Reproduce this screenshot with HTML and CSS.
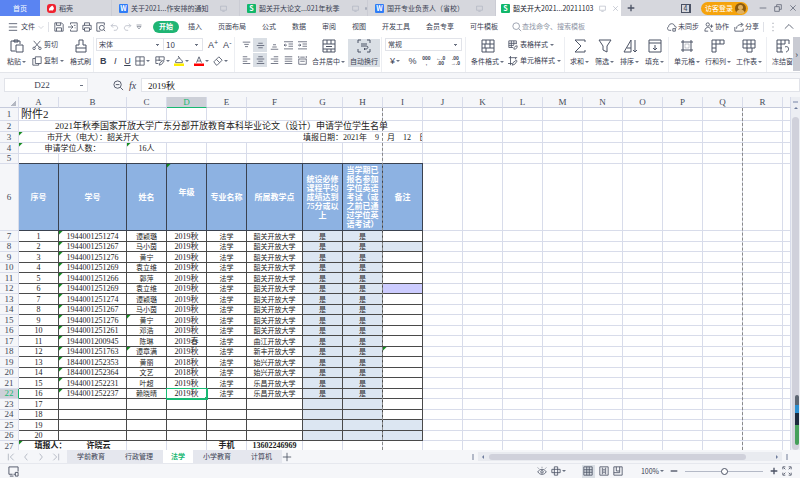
FILE: index.html
```html
<!DOCTYPE html>
<html lang="zh-CN">
<head>
<meta charset="utf-8">
<title>表格</title>
<link rel="stylesheet" href="styles.css">
</head>
<body>
<svg class="defs" aria-hidden="true">
  <symbol id="i-menu" viewBox="0 0 12 12"><path d="M1 2h10M1 6h10M1 10h10"/></symbol>
  <symbol id="i-down" viewBox="0 0 12 12"><path d="M1 4l5 5 5-5"/></symbol>
  <symbol id="i-up" viewBox="0 0 12 12"><path d="M1 8l5-5 5 5"/></symbol>
  <symbol id="i-left" viewBox="0 0 12 12"><path d="M8 1L4 6l4 5"/></symbol>
  <symbol id="i-right" viewBox="0 0 12 12"><path d="M4 1l4 5-4 5"/></symbol>
  <symbol id="i-first" viewBox="0 0 12 12"><path d="M2 1v10M10 1L5 6l5 5"/></symbol>
  <symbol id="i-last" viewBox="0 0 12 12"><path d="M10 1v10M2 1l5 5-5 5"/></symbol>
  <symbol id="i-more" viewBox="0 0 12 12"><path d="M1 2h10M2 5l4 5 4-5z"/></symbol>
  <symbol id="i-flame" viewBox="0 0 12 12"><path d="M7 2c-4 3-5 4-4 7 2-1 3-1 4 0 3-2 3-4 0-7z"/></symbol>
  <symbol id="i-save" viewBox="0 0 12 12"><path d="M1 1h8l2 2v8H1zM3 1v3h5V1M3 11V7h6v4"/></symbol>
  <symbol id="i-export" viewBox="0 0 12 12"><path d="M3 3V1h8v10H3V9M0 6h6M4 4l2 2-2 2M7 4h2M8 7h1"/></symbol>
  <symbol id="i-print" viewBox="0 0 12 12"><path d="M3 4V1h6v3M3 9H1V4h10v5H9M3 7h6v4H3z"/></symbol>
  <symbol id="i-preview" viewBox="0 0 12 12"><path d="M5 11H1V1h9v3M9 9l2 2"/><circle cx="7" cy="7" r="3"/></symbol>
  <symbol id="i-undo" viewBox="0 0 12 12"><path d="M4 1L1 4l3 3M1 4h6c5 0 5 7 0 7H5"/></symbol>
  <symbol id="i-redo" viewBox="0 0 12 12"><path d="M8 1l3 3-3 3M11 4H5c-5 0-5 7 0 7h2"/></symbol>
  <symbol id="i-search" viewBox="0 0 12 12"><circle cx="5" cy="5" r="4"/><path d="M8 8l3 3"/></symbol>
  <symbol id="i-zoom" viewBox="0 0 12 12"><circle cx="5" cy="5" r="4"/><path d="M8 8l3 3M3 5h4"/></symbol>
  <symbol id="i-cloud" viewBox="0 0 12 12"><path d="M5 10H3C0 10 0 6 2 5.500C2 1 9 1 9 5c3 0 2 3 1 3M7 8h3v3H7z"/></symbol>
  <symbol id="i-people" viewBox="0 0 12 12"><circle cx="4.500" cy="3" r="2"/><path d="M1 11c0-6 7-6 7-1M1 11h4M9 3v4M7 5h4M8 11h3"/></symbol>
  <symbol id="i-share" viewBox="0 0 12 12"><path d="M1 6v5h10V8M3 8c0-4 3-5 7-5M8 1l3 2-3 3"/></symbol>
  <symbol id="i-dots" viewBox="0 0 12 12"><path d="M6 1v1M6 5.500v1M6 10v1"/></symbol>
  <symbol id="i-screen" viewBox="0 0 12 12"><path d="M1 2h10v7H1zM4 11h4"/></symbol>
  <symbol id="i-close" viewBox="0 0 12 12"><path d="M2 2l8 8M10 2l-8 8"/></symbol>
  <symbol id="i-plus" viewBox="0 0 12 12"><path d="M6 1v10M1 6h10"/></symbol>
  <symbol id="i-minus" viewBox="0 0 12 12"><path d="M1 6h10"/></symbol>
  <symbol id="i-restore" viewBox="0 0 12 12"><path d="M1 4h7v7H1zM4 4V1h7v7H8"/></symbol>
  <symbol id="i-paste" viewBox="0 0 14 14"><path d="M5 12H1V2h9v3M4 1h4v2H4zM6 6h7v7H6z"/></symbol>
  <symbol id="i-cut" viewBox="0 0 12 12"><path d="M2 1l7 8M10 1L3 9"/><circle cx="2.500" cy="10" r="1.500"/><circle cx="9.500" cy="10" r="1.500"/></symbol>
  <symbol id="i-copy" viewBox="0 0 12 12"><path d="M4 1h7v8H4zM4 3H1v8h7V9"/></symbol>
  <symbol id="i-brush" viewBox="0 0 14 14"><path d="M5 6V1h4v5h3v3H2V6zM2 9v4h10V9"/></symbol>
  <symbol id="i-border" viewBox="0 0 12 12"><path d="M1 1h10v10H1zM6 1v10M1 6h10"/></symbol>
  <symbol id="i-draw" viewBox="0 0 12 12"><path d="M11 5V1H1v8h3M1 5h7M5 1v5M5 11l1-3 4-3 1 1-3 4z"/></symbol>
  <symbol id="i-fill" viewBox="0 0 12 12"><path d="M2 6l4-4 4 4v2H2zM5 0l2 3"/><path class="yellow" d="M0 9h12v3H0z"/></symbol>
  <symbol id="i-color" viewBox="0 0 12 12"><path d="M3 8l3-7 3 7M4 6h4"/><path class="red" d="M0 9h12v3H0z"/></symbol>
  <symbol id="i-eraser" viewBox="0 0 12 12"><path d="M1 7l6-6 4 4-6 6H4zM4 4l4 4"/></symbol>
  <symbol id="i-top" viewBox="0 0 12 12"><path d="M1 1.500h10M3 4.500h6M4 7.500h4"/></symbol>
  <symbol id="i-mid" viewBox="0 0 12 12"><path d="M3 3h6M1 6h10M3 9h6"/></symbol>
  <symbol id="i-bot" viewBox="0 0 12 12"><path d="M4 5h4M3 8h6M1 11h10"/></symbol>
  <symbol id="i-outdent" viewBox="0 0 12 12"><path d="M0 1h12M6 4h6M6 7h6M0 10.500h12M4 5.500H0M2 4L0 5.500 2 7"/></symbol>
  <symbol id="i-indent" viewBox="0 0 12 12"><path d="M0 1h12M6 4h6M6 7h6M0 10.500h12M0 5.500h4M2 4l2 1.500L2 7"/></symbol>
  <symbol id="i-al" viewBox="0 0 12 12"><path d="M1 1h6M1 4h10M1 7h6M1 10h10"/></symbol>
  <symbol id="i-ac" viewBox="0 0 12 12"><path d="M3 1h6M1 4h10M3 7h6M1 10h10"/></symbol>
  <symbol id="i-ar" viewBox="0 0 12 12"><path d="M5 1h6M1 4h10M5 7h6M1 10h10"/></symbol>
  <symbol id="i-aj" viewBox="0 0 12 12"><path d="M1 1h10M1 4h10M1 7h10M1 10h10"/></symbol>
  <symbol id="i-dist" viewBox="0 0 12 12"><path d="M1 4h10v7H1zM1 0v3M11 0v3M3 1.500h6M3 7h6"/></symbol>
  <symbol id="i-merge" viewBox="0 0 14 14"><path d="M1 1h12v12H1zM1 5h12M1 10h12M5 1v4M9 1v4M5 10v3M9 10v3M4 7.500h6"/></symbol>
  <symbol id="i-wrap" viewBox="0 0 14 14"><path d="M4 1H1v3M10 1h3v3M1 10v3h3M13 10v3h-3M4 5h6M4 7h5c3 0 2 3 0 3H7M8 9l-1 1 1 1"/></symbol>
  <symbol id="i-cond" viewBox="0 0 14 14"><path d="M1 1h12v12H1zM1 5h12M1 9h12M5 1v4M9 1v4M4 5v4M9 5v4M5 9v4"/></symbol>
  <symbol id="i-tstyle" viewBox="0 0 12 12"><path d="M6 9H1V1h9v4M1 4h9M1 6.500h6M4 1v8M7 1v5M7 11c0-3 2-4 4-4 0 3-1 4-4 4"/></symbol>
  <symbol id="i-cstyle" viewBox="0 0 12 12"><path d="M1 2h10M3 0v11M0 9h5M9 2v2M5 11l1-3 4-3 1 1-3 4z"/></symbol>
  <symbol id="i-sum" viewBox="0 0 14 14"><path d="M12 3V1H2l6 6-6 6h10v-2"/></symbol>
  <symbol id="i-filter" viewBox="0 0 14 14"><path d="M1 1h12L9 7v6l-4-2V7z"/></symbol>
  <symbol id="i-sort" viewBox="0 0 14 14"><path d="M1 13L8 1v12zM4 9h4M12 1v12M10 11l2 2 2-2"/></symbol>
  <symbol id="i-filldown" viewBox="0 0 14 14"><path d="M1 1h12v12H1zM1 4h12M7 6v5M5 9l2 2 2-2"/></symbol>
  <symbol id="i-cell" viewBox="0 0 14 14"><path d="M3 1v12M11 1v12M1 3h12M1 11h12"/><path d="M5 5h4v4H5z" opacity=".3"/></symbol>
  <symbol id="i-rowcol" viewBox="0 0 14 14"><path d="M1 1h12v4H1zM1 5v8h4V1M9 1v4M1 9h4"/></symbol>
  <symbol id="i-work" viewBox="0 0 14 14"><path d="M10 13H5V9H1V1h12v8h-3v4M1 5h12M5 1v8h5M9 1v8"/></symbol>
  <symbol id="i-freeze" viewBox="0 0 14 14"><path d="M7 13H1V1h12v4M1 5h8M1 9h5M5 1v12M9 1v4M9 8c4-2 5 4 1 5"/></symbol>
  <symbol id="i-eye" viewBox="0 0 12 12"><path d="M1 7c2-4 8-4 10 0-2 4-8 4-10 0M2 3L1 2M6 2V1M10 3l1-1"/><circle cx="6" cy="7" r="1.500"/></symbol>
  <symbol id="i-cross" viewBox="0 0 12 12"><path d="M4 1h4v10H4zM1 4h10v4H1z"/></symbol>
  <symbol id="i-grid" viewBox="0 0 12 12"><path d="M1 1h10v10H1zM1 4.500h10M1 7.500h10M4.500 1v10M7.500 1v10"/></symbol>
  <symbol id="i-page" viewBox="0 0 12 12"><path d="M1 1h10v10H1zM4 2v8M8 2v8M5 4h2M5 6h2M5 8h2"/></symbol>
  <symbol id="i-break" viewBox="0 0 12 12"><path d="M1 1h10v10H1zM4 1v5h4V1M8 6v2H1"/></symbol>
  <symbol id="i-full" viewBox="0 0 12 12"><path d="M1 4V1h3M8 1h3v3M11 8v3H8M4 11H1V8M2 2l2 2M10 2L8 4M2 10l2-2M10 10L8 8"/></symbol>
  <symbol id="i-task" viewBox="0 0 12 12"><path d="M5 9H1V1h10v5M2 11h4M8 7h3v4H8zM6 9h2"/></symbol>
</svg>

<header class="titlebar">
  <a class="doc home" href="#">首页</a>
  <a class="doc shell" href="#"><svg class="logo flame"><use href="#i-flame"/></svg>稻壳</a>
  <a class="doc" href="#"><span class="logo blue">W</span><span class="name">关于2021...作安排的通知</span><svg class="ico faint"><use href="#i-screen"/></svg></a>
  <a class="doc" href="#"><span class="logo green">S</span><span class="name">韶关开大论文...021年秋季</span><svg class="ico faint"><use href="#i-screen"/></svg><i class="dot"></i></a>
  <a class="doc" href="#"><span class="logo blue">W</span><span class="name">国开专业负责人（省校）</span><svg class="ico faint"><use href="#i-screen"/></svg></a>
  <a class="doc active" href="#"><span class="logo green">S</span><span class="name">韶关开大2021...20211103</span><svg class="ico faint"><use href="#i-screen"/></svg><svg class="ico faint"><use href="#i-close"/></svg></a>
  <button class="newtab" aria-label="新建"><svg class="ico"><use href="#i-plus"/></svg></button>
  <div class="window">
    <span class="count">4</span>
    <button class="login">访客登录<i class="avatar"></i></button>
    <button aria-label="最小化"><svg class="ico"><use href="#i-minus"/></svg></button>
    <button aria-label="还原"><svg class="ico"><use href="#i-restore"/></svg></button>
    <button aria-label="关闭"><svg class="ico"><use href="#i-close"/></svg></button>
  </div>
</header>

<nav class="menubar">
  <button class="file"><svg class="ico"><use href="#i-menu"/></svg>文件<svg class="ico tiny faint"><use href="#i-down"/></svg></button>
  <div class="quick">
    <button aria-label="保存"><svg class="ico"><use href="#i-save"/></svg></button>
    <button aria-label="输出"><svg class="ico"><use href="#i-export"/></svg></button>
    <button aria-label="打印"><svg class="ico"><use href="#i-print"/></svg></button>
    <button aria-label="预览"><svg class="ico"><use href="#i-preview"/></svg></button>
    <button aria-label="撤销"><svg class="ico faint"><use href="#i-undo"/></svg></button>
    <button aria-label="恢复"><svg class="ico faint"><use href="#i-redo"/></svg></button>
    <button aria-label="更多"><svg class="ico tiny"><use href="#i-more"/></svg></button>
  </div>
  <button class="start">开始</button>
  <div class="menus">
    <button>插入</button><button>页面布局</button><button>公式</button><button>数据</button><button>审阅</button><button>视图</button><button>开发工具</button><button>会员专享</button><button>可牛模板</button>
  </div>
  <label class="find"><svg class="ico"><use href="#i-search"/></svg><input type="text" placeholder="查找命令、搜索模板"></label>
  <div class="collab">
    <button><svg class="ico"><use href="#i-cloud"/></svg>未同步</button>
    <button><svg class="ico"><use href="#i-people"/></svg>协作</button>
    <button><svg class="ico"><use href="#i-share"/></svg>分享</button>
  </div>
  <div class="tail">
    <button aria-label="更多选项"><svg class="ico"><use href="#i-dots"/></svg></button>
    <button aria-label="收起"><svg class="ico"><use href="#i-up"/></svg></button>
  </div>
</nav>

<section class="ribbon">
  <div class="group clip">
    <button class="big drop"><svg class="icon"><use href="#i-paste"/></svg><span>粘贴</span></button>
    <div class="pair">
      <button><svg class="ico"><use href="#i-cut"/></svg><span>剪切</span></button>
      <button class="drop"><svg class="ico"><use href="#i-copy"/></svg><span>复制</span></button>
    </div>
    <button class="big"><svg class="icon"><use href="#i-brush"/></svg><span>格式刷</span></button>
  </div>
  <div class="group font">
    <div class="pair">
      <div class="line">
        <div class="selects">
          <select class="face" aria-label="字体"><option>宋体</option></select><select class="size" aria-label="字号"><option>10</option></select>
        </div>
        <button class="letter">A<sup>+</sup></button><button class="letter">A<sup>-</sup></button>
      </div>
      <div class="line styles">
        <button class="letter bold">B</button><button class="letter italic">I</button><button class="letter under">U</button>
        <button class="drop" aria-label="边框"><svg class="ico"><use href="#i-border"/></svg></button>
        <button class="drop" aria-label="绘制"><svg class="ico"><use href="#i-draw"/></svg></button>
        <button class="drop" aria-label="填充色"><svg class="ico"><use href="#i-fill"/></svg></button>
        <button class="drop" aria-label="字体颜色"><svg class="ico"><use href="#i-color"/></svg></button>
        <button class="drop" aria-label="清除"><svg class="ico"><use href="#i-eraser"/></svg></button>
      </div>
    </div>
  </div>
  <div class="group align">
    <div class="aligns">
      <button aria-label="顶端"><svg class="ico"><use href="#i-top"/></svg></button>
      <button class="on" aria-label="垂直居中"><svg class="ico"><use href="#i-mid"/></svg></button>
      <button aria-label="底端"><svg class="ico"><use href="#i-bot"/></svg></button>
      <button aria-label="减少缩进"><svg class="ico"><use href="#i-outdent"/></svg></button>
      <button aria-label="增加缩进"><svg class="ico"><use href="#i-indent"/></svg></button>
      <button aria-label="左对齐"><svg class="ico"><use href="#i-al"/></svg></button>
      <button class="on" aria-label="居中"><svg class="ico"><use href="#i-ac"/></svg></button>
      <button aria-label="右对齐"><svg class="ico"><use href="#i-ar"/></svg></button>
      <button aria-label="两端对齐"><svg class="ico"><use href="#i-aj"/></svg></button>
      <button aria-label="分散对齐"><svg class="ico"><use href="#i-dist"/></svg></button>
    </div>
    <button class="big drop"><svg class="icon"><use href="#i-merge"/></svg><span>合并居中</span></button>
    <button class="big on"><svg class="icon"><use href="#i-wrap"/></svg><span>自动换行</span></button>
  </div>
  <div class="group number">
    <div class="pair">
      <div class="selects"><select class="format" aria-label="数字格式"><option>常规</option></select></div>
      <div class="line spread">
        <button class="drop letter">¥</button><button class="letter">%</button>
        <button class="digits">000<br>,</button><button class="digits">←.0<br>.00</button><button class="digits">.00<br>→.0</button>
      </div>
    </div>
  </div>
  <div class="group cond">
    <button class="big drop"><svg class="icon"><use href="#i-cond"/></svg><span>条件格式</span></button>
    <div class="pair">
      <button class="drop"><svg class="ico"><use href="#i-tstyle"/></svg><span>表格样式</span></button>
      <button class="drop"><svg class="ico"><use href="#i-cstyle"/></svg><span>单元格样式</span></button>
    </div>
  </div>
  <div class="group tools">
    <button class="big drop"><svg class="icon"><use href="#i-sum"/></svg><span>求和</span></button>
    <button class="big drop"><svg class="icon"><use href="#i-filter"/></svg><span>筛选</span></button>
    <button class="big drop"><svg class="icon"><use href="#i-sort"/></svg><span>排序</span></button>
    <button class="big drop"><svg class="icon"><use href="#i-filldown"/></svg><span>填充</span></button>
  </div>
  <div class="group tools">
    <button class="big drop"><svg class="icon"><use href="#i-cell"/></svg><span>单元格</span></button>
    <button class="big drop"><svg class="icon"><use href="#i-rowcol"/></svg><span>行和列</span></button>
    <button class="big drop"><svg class="icon"><use href="#i-work"/></svg><span>工作表</span></button>
  </div>
  <div class="group last">
    <button class="big"><svg class="icon"><use href="#i-freeze"/></svg><span>冻结窗</span></button>
  </div>
  <button class="scroll" aria-label="向右滚动">›</button>
</section>

<section class="formula">
  <select class="namebox" aria-label="名称框"><option>D22</option></select>
  <svg class="ico large"><use href="#i-zoom"/></svg><span class="fx">fx</span>
  <input type="text" value="2019秋" aria-label="编辑栏">
</section>

<main class="work">
  <div class="sheet">
    <table>
      <colgroup><col class="c-head"><col class="c-std"><col class="c-id"><col class="c-std"><col class="c-std"><col class="c-std"><col class="c-site"><col class="c-std"><col class="c-std"><col class="c-std"><col class="c-std"><col class="c-std"><col class="c-std"><col class="c-std"><col class="c-std"><col class="c-std"><col class="c-std"><col class="c-std"><col class="c-std"><col></colgroup>
      <thead>
        <tr><th class="corner"></th><th>A</th><th>B</th><th>C</th><th class="current">D</th><th>E</th><th>F</th><th>G</th><th>H</th><th>I</th><th>J</th><th>K</th><th>L</th><th>M</th><th>N</th><th>O</th><th>P</th><th>Q</th><th>R</th><th></th></tr>
      </thead>
      <tbody class="top">
        <tr class="r1"><th>1</th><td colspan="2" class="attach">附件2</td><td></td><td></td><td></td><td></td><td></td><td></td><td></td><td colspan="10" class="rest"></td></tr>
        <tr><th>2</th><td colspan="9" class="title">2021年秋季国家开放大学广东分部开放教育本科毕业论文（设计）申请学位学生名单</td><td colspan="10" class="rest"></td></tr>
        <tr><th>3</th><td colspan="6" class="school note">市开大（电大）：韶关开大</td><td colspan="3" class="date"><div><span>填报日期：</span><span>2021年</span><span>9</span><span>月</span><span>12</span><span>日</span></div></td><td colspan="10" class="rest"></td></tr>
        <tr><th>4</th><td colspan="2" class="note">申请学位人数：</td><td class="note">16人</td><td></td><td></td><td></td><td></td><td></td><td></td><td colspan="10" class="rest"></td></tr>
        <tr class="r5"><th>5</th><td></td><td></td><td></td><td></td><td></td><td></td><td></td><td></td><td></td><td colspan="10" class="rest"></td></tr>
        <tr class="fields"><th>6</th><td>序号</td><td>学号</td><td>姓名</td><td class="note grade">年级</td><td>专业名称</td><td>所属教学点</td><td>统设必修课程平均成绩达到75分或以上</td><td>当学期已报名参加学位英语考试（或之前已通过学位英语考试）</td><td>备注</td><td colspan="10" class="rest"></td></tr>
      </tbody>
      <tbody class="records" id="records"></tbody>
      <tbody>
        <tr class="foot"><th>27</th><td colspan="2" class="note"><span>填报人：</span><span>许晓云</span></td><td></td><td></td><td>手机</td><td>13602246969</td><td></td><td></td><td></td><td colspan="10" class="rest"></td></tr>
      </tbody>
    </table>
    <i class="pagebreak first"></i><i class="pagebreak second"></i>
  </div>
  <div class="vscroll"><i class="split"></i><i class="arrow"></i><i class="thumb"></i><i class="meter"></i></div>
</main>

<nav class="sheets">
  <div class="navs">
    <button aria-label="首张"><svg class="ico small"><use href="#i-first"/></svg></button>
    <button aria-label="上一张"><svg class="ico small"><use href="#i-left"/></svg></button>
    <button aria-label="下一张"><svg class="ico small"><use href="#i-right"/></svg></button>
    <button aria-label="末张"><svg class="ico small"><use href="#i-last"/></svg></button>
  </div>
  <a href="#">学前教育</a><a href="#">行政管理</a><a href="#" class="active">法学</a><a href="#">小学教育</a><a href="#">计算机</a>
  <button class="add" aria-label="新建工作表"><svg class="ico"><use href="#i-plus"/></svg></button>
  <div class="hscroll"><i class="bar"></i><div class="track"><i class="tri back"></i><i class="thumb"></i><i class="tri"></i></div><i class="bar"></i></div>
</nav>

<footer class="status">
  <svg class="ico large"><use href="#i-task"/></svg>
  <div class="views">
    <button aria-label="护眼"><svg class="ico"><use href="#i-eye"/></svg></button>
    <button class="drop" aria-label="阅读"><svg class="ico"><use href="#i-cross"/></svg></button>
    <button class="on" aria-label="普通视图"><svg class="ico"><use href="#i-grid"/></svg></button>
    <button aria-label="页面布局"><svg class="ico"><use href="#i-page"/></svg></button>
    <button aria-label="分页预览"><svg class="ico"><use href="#i-break"/></svg></button>
    <button class="drop percent">100%</button>
    <button aria-label="缩小"><svg class="ico small strong"><use href="#i-minus"/></svg></button>
    <input type="range" min="0" max="200" value="100" aria-label="缩放">
    <button aria-label="放大"><svg class="ico small strong"><use href="#i-plus"/></svg></button>
    <button aria-label="全屏"><svg class="ico"><use href="#i-full"/></svg></button>
  </div>
</footer>
<script src="sheet.js"></script>
</body>
</html>
```
FILE: sheet.js
```js
// id, name, grade, site
const people = [
  ["1944001251274", "谭颖璐", "2019秋", "韶关开放大学"],
  ["1944001251267", "马小茵", "2019秋", "韶关开放大学"],
  ["1944001251276", "黄宁", "2019秋", "韶关开放大学"],
  ["1944001251269", "袁立维", "2019秋", "韶关开放大学"],
  ["1944001251266", "郭萍", "2019秋", "韶关开放大学"],
  ["1944001251269", "袁立维", "2019秋", "韶关开放大学"],
  ["1944001251274", "谭颖璐", "2019秋", "韶关开放大学"],
  ["1944001251267", "马小茵", "2019秋", "韶关开放大学"],
  ["1944001251276", "黄宁", "2019秋", "韶关开放大学"],
  ["1944001251261", "邓浩", "2019秋", "韶关开放大学"],
  ["1944001200945", "陈琳", "2019春", "曲江开放大学"],
  ["1944001251763", "谭章满", "2019秋", "新丰开放大学"],
  ["1844001252353", "黄丽", "2018秋", "始兴开放大学"],
  ["1844001252364", "文艺", "2018秋", "始兴开放大学"],
  ["1944001252231", "叶超", "2019秋", "乐昌开放大学"],
  ["1944001252237", "赖晓晴", "2019秋", "乐昌开放大学"]
];
const markedNames = [9, 12];
const tintedRemarks = { 2: "tint", 6: "violet", 12: "note", 19: "tint", 20: "tint" };

const body = document.getElementById("records");
for (let n = 1; n <= 20; n++) {
  const p = people[n - 1];
  const selected = n === 16;
  const row = body.insertRow();
  const head = document.createElement("th");
  head.textContent = n + 6;
  if (selected) head.className = "current";
  row.append(head);
  const add = (text, cls) => {
    const cell = row.insertCell();
    cell.textContent = text;
    if (cls) cell.className = cls;
    return cell;
  };
  add(n, "num");
  add(p ? p[0] : "", p ? "num note" : "");
  add(p ? p[1] : "", markedNames.includes(n) ? "note" : "");
  add(p ? p[2] : "", selected ? "num selected" : "num");
  add(p ? "法学" : "");
  add(p ? p[3] : "");
  add(p ? "是" : "", "tint");
  add(p ? "是" : "", "tint");
  add("", tintedRemarks[n]);
  add("", "rest").colSpan = 10;
}
```
FILE: styles.css
```css
* { box-sizing: border-box; }

body {
  margin: 0;
  height: 100vh;
  display: flex;
  flex-direction: column;
  overflow: hidden;
  background: #f5f6f9;
  color: #3a4152;
  font: 7px/9px "Noto Sans CJK SC", sans-serif;
}

button, input, select {
  margin: 0;
  padding: 0;
  border: 0;
  background: none;
  color: inherit;
  font: inherit;
  appearance: none;
  outline: 0;
}
button { white-space: nowrap; display: flex; align-items: center; }
a { color: inherit; text-decoration: none; }
i { font-style: normal; }

.defs { position: absolute; width: 0; height: 0; }
.ico, .icon { fill: none; stroke: #4b5264; stroke-width: 1; flex: none; width: 10px; height: 10px; }
.icon { width: 14px; height: 14px; }
.large { width: 11px; height: 11px; }
.small { width: 8px; height: 8px; }
.tiny { width: 6px; height: 6px; }
.faint { stroke: #a9aebb; }
.strong { stroke-width: 2; }
.yellow { fill: #ffee00; stroke: none; }
.red { fill: #ff0000; stroke: none; }

.drop::after {
  content: "";
  margin-left: 1px;
  border: 2px solid transparent;
  border-top-color: #6b7282;
  border-bottom: 0;
}

/* Document tabs */
.titlebar { display: flex; flex: none; height: 16px; background: #d6d7dd; }
.doc {
  display: flex;
  align-items: center;
  gap: 3px;
  width: 128px;
  padding-left: 7px;
  border-right: 1px solid #cbccd4;
  white-space: nowrap;
}
.doc .name { margin-right: 9px; }
.doc .ico { width: 7px; height: 7px; margin-right: 3px; }
.home { width: 40px; padding: 0; justify-content: center; background: #5a84f2; color: #fff; border: 0; }
.shell { width: 72px; }
.active.doc { width: 125px; padding-left: 5px; background: #fff; border: 0; color: #20242e; }
.active .name { margin-right: 3px; }
.logo { flex: none; width: 9px; height: 9px; border-radius: 1px; color: #fff; text-align: center; font-weight: bold; }
.flame { background: #f0222f; border-radius: 3px; fill: #fff; }
.blue { background: #2f7cf6; }
.green { background: #12b76a; }
.dot { width: 3px; height: 3px; border-radius: 50%; background: #a9aebb; }
.newtab { margin-left: 6px; }
.newtab .ico { width: 8px; height: 8px; stroke-width: 2; }
.window { margin-left: auto; display: flex; align-items: center; gap: 7px; padding-right: 3px; }
.window .ico { width: 8px; height: 8px; }
.count { width: 10px; height: 9px; border: 1px solid #4b5264; border-right-width: 2px; line-height: 7px; text-align: center; }
.login { height: 13px; padding: 0 2px 0 4px; gap: 2px; border-radius: 7px; background: #f5a30c; color: #fff; margin: 0 4px 0 3px; }
.avatar { width: 11px; height: 11px; border-radius: 50%; background: radial-gradient(circle at 50% 40%, #e0b060 2px, transparent 3px), radial-gradient(circle at 50% 100%, #e0b060 4px, #8a5a10 5px); }

/* Menu bar */
.menubar { display: flex; flex: none; align-items: center; height: 21px; padding-left: 8px; background: #fff; }
.file { gap: 3px; padding-right: 4px; border-right: 1px solid #dfe1e7; }
.quick { display: flex; align-items: center; gap: 4px; margin-left: 5px; }
.quick .faint { width: 9px; height: 8px; }
.start { height: 12px; padding: 0 6px; border-radius: 6px; background: #1fb574; color: #fff; font-weight: bold; margin-left: 11px; }
.menus { display: flex; gap: 16px; margin-left: 9px; }
.find { display: flex; align-items: center; margin-left: 14px; }
.find input { width: 72px; }
.find .ico, .find input::placeholder { stroke: #8e95a5; color: #8e95a5; opacity: 1; }
.collab { display: flex; gap: 5px; margin-left: auto; }
.collab button { gap: 1px; }
.tail { display: flex; gap: 6px; margin-left: 4px; padding: 0 6px 0 4px; border-left: 1px solid #dfe1e7; }

/* Ribbon */
.ribbon { display: flex; flex: none; height: 36px; background: #fff; border-bottom: 1px solid #e3e5ea; overflow: hidden; }
.group { display: flex; flex: none; align-items: center; padding: 0 5px 4px; border-right: 1px solid #eceef2; }
.big { display: grid; grid-template-columns: auto auto; justify-content: center; justify-items: center; height: 28px; row-gap: 3px; }
.big .icon { grid-column: 1 / -1; }
.big:not(.drop) { grid-template-columns: auto; }
.pair { display: flex; flex-direction: column; gap: 3px; }
.pair > button, .line { height: 13px; gap: 2px; }
.pair > button::after { margin-left: 0; }
.line { display: flex; align-items: center; }
.on { background: #dadfe5; }
.clip { width: 94px; padding-left: 7px; gap: 6px; }
.font { width: 141px; padding-left: 2px; }
.selects { display: flex; height: 13px; }
.selects select, .namebox {
  height: 13px;
  padding-left: 2px;
  border: 1px solid #e1e3e9;
  background:
    linear-gradient(#6b7282, #6b7282) right 4px center / 3px 1px no-repeat,
    linear-gradient(#6b7282, #6b7282) right 5px top 6px / 1px 1px no-repeat,
    #fff;
}
.selects .face { width: 68px; }
.selects .size { width: 39px; border-left: 0; font-size: 8px; }
.selects .format { width: 77px; }
.letter { font: 9px/10px "Liberation Sans", sans-serif; }
.line > .letter { padding-left: 3px; }
.letter sup { font-size: 7px; line-height: 5px; margin-bottom: 4px; }
.bold { font-weight: bold; }
.italic { font-style: italic; }
.under { text-decoration: underline; }
.styles { justify-content: space-between; padding: 0 3px 0 1px; }
.align { padding-left: 4px; padding-right: 1px; }
.aligns { display: grid; grid-template-columns: repeat(5, 14px); row-gap: 1px; margin-right: 3px; }
.aligns button { height: 14px; justify-content: center; }
.aligns .ico { width: 9px; height: 9px; }
.align .big.on { width: 32px; margin-left: 3px; }
.number { width: 84px; padding-left: 3px; }
.spread { justify-content: space-between; padding: 0 2px; }
.digits { font: bold 5px/5px "Liberation Sans", sans-serif; }
.cond { width: 99px; gap: 4px; }
.tools { gap: 6px; padding-right: 4px; }
.tools + .tools { gap: 5px; }
.last { flex: 1 1 0; min-width: 0; padding-right: 0; overflow: hidden; border: 0; }
.scroll { flex: none; width: 7px; height: 34px; justify-content: center; background: #c9cbd3; font-size: 9px; }

/* Formula bar */
.formula { display: flex; flex: none; align-items: center; height: 24px; padding: 1px 0 1px 4px; font: 9px/11px "Liberation Serif", "Noto Sans CJK SC", serif; }
.namebox { width: 84px; height: 14px; text-align: center; text-align-last: center; padding: 0 8px 0 0; }
.formula .ico { margin-left: 25px; }
.fx { width: 17px; text-align: center; font-style: italic; font-size: 10px; }
.formula input { flex: 1; min-width: 0; height: 14px; padding-left: 6px; border: 1px solid #e1e3e9; background: #fff; color: #222; }

/* Sheet */
.work { display: flex; flex: 1; min-height: 0; }
.sheet { position: relative; flex: 1; min-width: 0; overflow: hidden; background: #fff; }
table { width: 100%; table-layout: fixed; border-collapse: separate; border-spacing: 0; color: #222; }
.c-head { width: 19px; }
.c-std { width: 40px; }
.c-id { width: 68px; }
.c-site { width: 56px; }
tr { height: 11px; }
th, td { padding: 0; height: inherit; overflow: hidden; white-space: nowrap; line-height: 9px; border: solid #d8dcea; border-width: 0 1px 1px 0; text-align: center; }
th { background: #f5f6f9; color: #444a58; font: 9px/9px "Liberation Serif", serif; }
thead th { border-bottom-color: #c6cbdc; }
.corner { background: linear-gradient(135deg, transparent 50%, #b4b8c2 50%) right 2px bottom 1px / 6px 6px no-repeat #f5f6f9; }
th.current { background: #cdd0d8; color: #18b872; border-bottom-color: #18b872; }
tbody th.current { border-color: #d8dcea; border-right-color: #18b872; }
.r1 { height: 13px; }
.r5 { height: 10px; }
.top td { font-size: 8px; font-family: "Liberation Serif", "Noto Sans CJK SC", serif; }
.top .attach { font-size: 11px; line-height: 12px; text-align: left; padding-left: 2px; }
.top .title { font-size: 9px; line-height: 10px; padding-left: 36px; text-align: left; }
.top .school { text-align: left; padding-left: 28px; border-right: 0; }
.date div { display: flex; gap: 8px; }
.date span:first-child { margin-right: -8px; }
.rest { background: repeating-linear-gradient(to right, transparent 0 39px, #d8dcea 39px 40px); }
.note { background: linear-gradient(135deg, #128a1e 2px, transparent 3px) no-repeat; }

.fields { height: 67px; }
.fields td:not(.rest) { background-color: #8db2e2; color: #fff; font-weight: bold; white-space: normal; border-color: #3a4250; padding: 0 2px; box-shadow: 0 -1px #3a4250; }
.fields td.grade { padding-bottom: 10px; }

.records tr:nth-child(even) { height: 10px; }
.records td:not(.rest) { border-color: #4a4a4a; }
.num { font: 8px/9px "Liberation Serif", "Noto Sans CJK SC", serif; }
.tint { background-color: #dce6f2; }
.violet { background-color: #ccccff; }
.records td.selected { position: relative; overflow: visible; box-shadow: 0 0 0 1px #18b872; border-color: #18b872; }
.selected::after { content: ""; position: absolute; right: -2px; bottom: -2px; width: 3px; height: 3px; background: #18b872; }
.foot td { font: bold 8px/10px "Liberation Serif", "Noto Sans CJK SC", serif; vertical-align: top; overflow: visible; }
.foot .note span + span { margin-left: 20px; }
.pagebreak { position: absolute; top: 11px; bottom: 0; border-left: 1px dashed #8a8a8a; }
.first { left: 382px; }
.second { left: 742px; }

.vscroll { position: relative; display: flex; flex-direction: column; align-items: center; flex: none; width: 9px; background: #eceef3; }
.split { width: 5px; height: 2px; margin: 4px 0; background: #b0b8cc; }
.arrow { border: 2px solid transparent; border-bottom-color: #6d7b9c; border-top: 0; }
.vscroll .thumb { flex: 1; width: 7px; margin-top: 8px; border-radius: 4px; background: #d0d1db; }
.meter { position: absolute; right: 1px; bottom: 5px; width: 4px; height: 50px; border-radius: 2px; background: linear-gradient(#5c6672 0 10px, #2b8fd0 10px 18px, #1b2a3c 18px 30px, #45a05a 30px); }

/* Sheet tabs */
.sheets { display: flex; flex: none; align-items: center; height: 13px; }
.sheets a { height: 13px; padding: 1px 10px; line-height: 11px; background: #e5e7ee; }
.sheets a.active { padding: 1px 8px; background: #fff; color: #18b872; font-weight: bold; }
.navs { display: flex; gap: 7px; width: 67px; padding-left: 7px; }
.navs .ico { stroke: #9aa0ae; }
.hscroll { display: flex; align-items: center; gap: 4px; margin-left: auto; width: 41%; padding-right: 12px; }
.bar { width: 2px; height: 6px; background: #b3b9c8; }
.track { display: flex; flex: 1; align-items: center; height: 9px; padding: 0 4px; background: #e9ebf0; }
.track .thumb { flex: 1; height: 6px; margin: 0 30px 0 5px; border-radius: 3px; background: #d0d1db; }
.tri { border: 2px solid transparent; border-left-color: #6d7b9c; border-right: 0; }
.tri.back { border: 2px solid transparent; border-right-color: #6d7b9c; border-left: 0; }

/* Status bar */
.status { display: flex; flex: none; align-items: center; height: 15px; padding: 0 8px; border-top: 1px solid #e6e8ee; }
.views { display: flex; align-items: center; gap: 4px; margin-left: auto; }
.views .on { width: 13px; height: 13px; justify-content: center; margin-left: 12px; }
.views .percent { margin: 0 2px 0 14px; }
.views input { width: 78px; height: 9px; margin: 0 3px; background: linear-gradient(#b4b9c6, #b4b9c6) center / 100% 1px no-repeat; }
.views input::-webkit-slider-thumb { appearance: none; width: 7px; height: 7px; border: 1px solid #4b5264; border-radius: 50%; background: #fff; }
```
